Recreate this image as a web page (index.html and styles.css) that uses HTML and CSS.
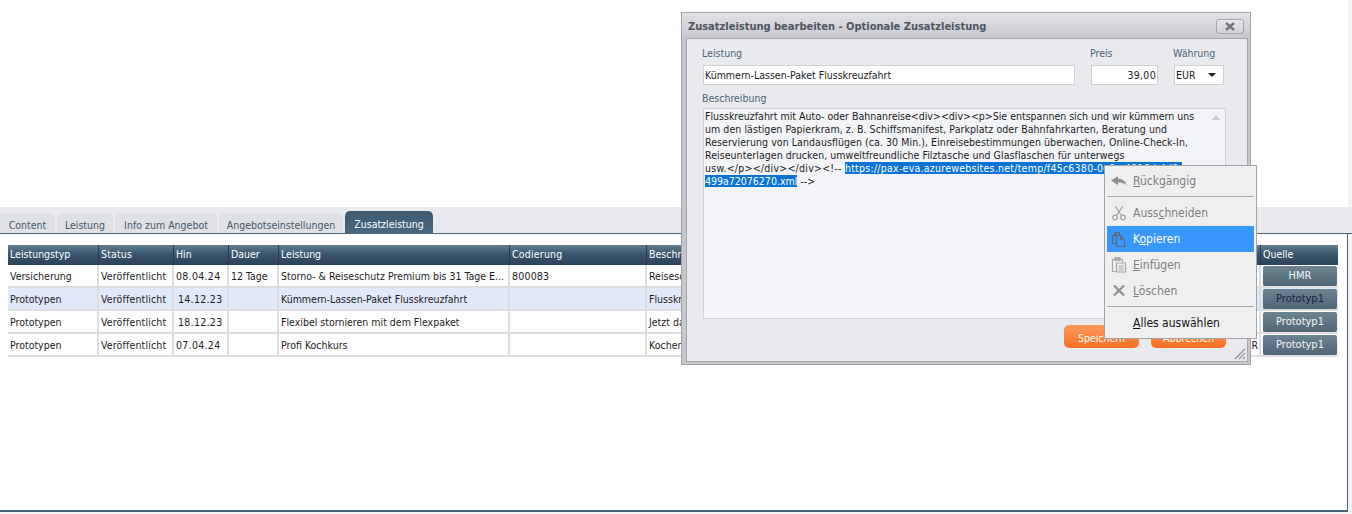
FILE: index.html
```html
<!DOCTYPE html>
<html lang="de">
<head>
<meta charset="utf-8">
<title>Zusatzleistung</title>
<link rel="stylesheet" href="styles.css">
</head>
<body>
<div class="page">
  <div class="top"></div>
  <div class="tabbar">
    <div class="tab t1">Content</div>
    <div class="tab t2">Leistung</div>
    <div class="tab t3">Info zum Angebot</div>
    <div class="tab t4">Angebotseinstellungen</div>
    <div class="tab t5 active">Zusatzleistung</div>
  </div>
  <div class="content">
    <div class="grid">
      <div class="row head">
        <div class="c c1">Leistungstyp</div><div class="c c2">Status</div><div class="c c3">Hin</div><div class="c c4">Dauer</div><div class="c c5">Leistung</div><div class="c c6">Codierung</div><div class="c c7">Beschreibung</div><div class="c c8">Quelle</div>
      </div>
      <div class="row">
        <div class="c c1">Versicherung</div><div class="c c2">Veröffentlicht</div><div class="c c3">08.04.24</div><div class="c c4">12 Tage</div><div class="c c5">Storno- &amp; Reiseschutz Premium bis 31 Tage E...</div><div class="c c6">800083</div><div class="c c7">Reiseschutz<span class="tail">...</span></div><div class="c c8"><span class="src">HMR</span></div>
      </div>
      <div class="row sel">
        <div class="c c1">Prototypen</div><div class="c c2">Veröffentlicht</div><div class="c c3 r">14.12.23</div><div class="c c4"></div><div class="c c5">Kümmern-Lassen-Paket Flusskreuzfahrt</div><div class="c c6"></div><div class="c c7">Flusskreuzfahrt<span class="tail">...</span></div><div class="c c8"><span class="src dark">Prototyp1</span></div>
      </div>
      <div class="row">
        <div class="c c1">Prototypen</div><div class="c c2">Veröffentlicht</div><div class="c c3 r">18.12.23</div><div class="c c4"></div><div class="c c5">Flexibel stornieren mit dem Flexpaket</div><div class="c c6"></div><div class="c c7">Jetzt das<span class="tail">...</span></div><div class="c c8"><span class="src">Prototyp1</span></div>
      </div>
      <div class="row">
        <div class="c c1">Prototypen</div><div class="c c2">Veröffentlicht</div><div class="c c3">07.04.24</div><div class="c c4"></div><div class="c c5">Profi Kochkurs</div><div class="c c6"></div><div class="c c7">Kochen<span class="tail">R</span></div><div class="c c8"><span class="src">Prototyp1</span></div>
      </div>
    </div>
  </div>
</div>

<section class="dialog">
  <header class="dlg-title">
    <span>Zusatzleistung bearbeiten - Optionale Zusatzleistung</span>
    <button class="close" type="button"><svg width="12" height="9" viewBox="0 0 12 9"><path d="M2 1l8 7M10 1L2 8" stroke="#72757c" stroke-width="2.400" fill="none"/></svg></button>
  </header>
  <div class="dlg-body">
    <div class="fields">
      <label class="f f-name"><span>Leistung</span><div class="input">Kümmern-Lassen-Paket Flusskreuzfahrt</div></label>
      <label class="f f-price"><span>Preis</span><div class="input right">39,00</div></label>
      <label class="f f-cur"><span>Währung</span><div class="input select">EUR<i class="caret"></i></div></label>
    </div>
    <div class="f-desc">
      <span class="lbl">Beschreibung</span>
      <div class="area">
        <div class="txt">
          <div>Flusskreuzfahrt mit Auto- oder Bahnanreise&lt;div&gt;&lt;div&gt;&lt;p&gt;Sie entspannen sich und wir kümmern uns</div>
          <div class="ln">um den lästigen Papierkram, z. B. Schiffsmanifest, Parkplatz oder Bahnfahrkarten, Beratung und</div>
          <div class="ln">Reservierung von Landausflügen (ca. 30 Min.), Einreisebestimmungen überwachen, Online-Check-In,</div>
          <div class="ln">Reiseunterlagen drucken, umweltfreundliche Filztasche und Glasflaschen für unterwegs</div>
          <div class="wide">usw.&lt;/p&gt;&lt;/div&gt;&lt;/div&gt;&lt;!-- <mark>https://pax-eva.azurewebsites.net/temp/f45c6380-0c6a-4816-b4d9-</mark></div>
          <div><mark>499a72076270.xml</mark> --&gt;</div>
        </div>
        <svg class="up" width="8" height="5" viewBox="0 0 8 5"><path d="M4 0l4 5H0z" fill="#c9cbd0"/></svg>
      </div>
    </div>
    <div class="actions">
      <button class="btn" type="button">Speichern</button>
      <button class="btn" type="button">Abbrechen</button>
    </div>
    <svg class="grip" width="12" height="12" viewBox="0 0 12 12"><path d="M11 1L1 11M11 5L5 11M11 9L9 11" stroke="#8f9198" stroke-width="1.200" fill="none"/></svg>
  </div>
</section>

<nav class="menu">
  <div class="mi"><svg class="ic" width="16" height="10" viewBox="0 0 16 10"><path d="M7 0L0 4.500 7 9V6.500c3.500 0 6 .5 8.500 2.500C14.500 5 11.500 3 7 2.500z" fill="#8e8e8e"/></svg><span><u>R</u>ückgängig</span></div>
  <div class="sep"></div>
  <div class="mi"><svg class="ic" width="16" height="16" viewBox="0 0 16 16"><g fill="none" stroke="#a3a3a3" stroke-width="1.200"><path d="M4 1l6.500 9.500M12 1L5.500 10.500"/><circle cx="4" cy="12.500" r="2.300"/><circle cx="12" cy="12.500" r="2.300"/></g></svg><span>Auss<u>c</u>hneiden</span></div>
  <div class="mi hot"><svg class="ic" width="16" height="16" viewBox="0 0 16 16"><g fill="none" stroke="#5f6a78" stroke-width="1.200"><path d="M1.500 5L5 1.500h3.500V4M1.500 5v7.500H5M1.500 5H5V1.500"/><path d="M5.500 4.500h4l4 4v7h-8zM9.500 4.500v4h4"/></g></svg><span>K<u>o</u>pieren</span></div>
  <div class="mi"><svg class="ic" width="16" height="16" viewBox="0 0 16 16"><g fill="none" stroke="#a9a9a9" stroke-width="1.200"><path d="M4 2.500H1.500v12H5"/><path d="M9 2.500h2.500V5"/><path d="M4 .5h5v3H4z" fill="#a9a9a9"/><path d="M5.500 6h9v9h-9zM7.500 9h5M7.500 11h5M7.500 13h5"/></g></svg><span><u>E</u>infügen</span></div>
  <div class="mi"><svg class="ic" width="16" height="16" viewBox="0 0 16 16"><path d="M3 2.500l10 10M13 2.500l-10 10" stroke="#8e8e8e" stroke-width="2.200" fill="none"/></svg><span><u>L</u>öschen</span></div>
  <div class="sep"></div>
  <div class="mi strong"><span class="ic"></span><span><u>A</u>lles auswählen</span></div>
</nav>
</body>
</html>
```

FILE: styles.css
```css
* { box-sizing: border-box; }
html, body { margin: 0; padding: 0; height: 514px; overflow: hidden; background: #fff; }
body { font: 10.5px/13px "DejaVu Sans", sans-serif; font-stretch: condensed; color: #1c1c22; }
button { font-family: inherit; font-stretch: inherit; }
.page { display: flex; flex-direction: column; width: 1352px; height: 514px; background: #f3f3f5; }
.top { height: 207px; width: 1348px; background: #fff; flex: none; }
.tabbar { display: flex; align-items: flex-end; gap: 2px; height: 27px; flex: none; background: #e9eaee; border-bottom: 1px solid #48637a; }
.tab { height: 20px; padding-top: 1px; text-align: center; white-space: nowrap; line-height: 22px; background: #dfe1e4; color: #46586a; border-radius: 5px 5px 0 0; }
.tab:first-child { border-top-left-radius: 0; }
.t1 { width: 55px; }
.t2 { width: 56px; }
.t3 { width: 102px; }
.t4 { width: 124px; }
.t5 { width: 88px; }
.tab.active { height: 22px; line-height: 24px; background: linear-gradient(#3f5a70, #4a677e); color: #fff; }
.content { flex: none; width: 1348px; height: 278px; background: #fff; padding: 11px 0 0 8px; border-right: 1px solid #48637a; border-bottom: 2px solid #48637a; }
.grid { display: flex; flex-direction: column; width: 1330px; }
.row { display: flex; height: 23px; border-bottom: 2px solid #dcdee2; }
.row.sel { background: #e0e8fa; }
.row.head { height: 20px; border: 0; color: #fff; background: linear-gradient(#637f92, #3b566c 45%, #2c4358); }
.c { flex: none; padding: 0 0 0 2px; line-height: 23px; white-space: nowrap; overflow: hidden; border-right: 2px solid #dcdee2; }
.head .c { line-height: 19px; border-right: 1px solid #263b4e; padding-right: 1px; }
.c1 { width: 91px; }
.c2 { width: 75px; letter-spacing: .15px; }
.c3 { width: 55px; letter-spacing: .3px; }
.head .c3 { letter-spacing: 0; }
.c3.r { padding-left: 4px; }
.c4 { width: 50px; }
.c5 { width: 231px; }
.c6 { width: 137px; letter-spacing: .2px; }
.c7 { width: 614px; position: relative; }
.c8 { width: 77px; border-right: 0; padding: 1px 0 0 2px; }
.head .c8 { border: 0; padding: 0 0 0 2px; }
.tail { position: absolute; right: 1px; top: 0; }
.src { display: block; width: 74px; height: 20px; line-height: 19px; text-align: center; color: #eef3f6; border-radius: 2px; background: linear-gradient(#6d8493, #4f6676); box-shadow: 0 1px 1px #9aa4ac; font-size: 11px; }
.src.dark { color: #1a2438; }

.dialog { position: absolute; left: 681px; top: 12px; width: 570px; height: 353px; background: linear-gradient(#e2e3e7, #c6c7cd 26px); border: 1px solid #a0a1a9; }
.dlg-title { height: 25px; display: flex; align-items: center; justify-content: space-between; padding: 1px 6px 0 6px; font-size: 11px; font-weight: 700; color: #50555f; }
.close { width: 28px; height: 15px; padding: 0; display: flex; align-items: center; justify-content: center; background: linear-gradient(#e9eaed, #cfd0d4); border: 1px solid #a5a7ad; border-radius: 3px; }
.dlg-body { position: relative; margin: 0 2px 0 4px; height: 324px; background: #e9eaee; border: 1px solid #a6a7ae; padding: 8px 0 0 16px; }
.fields { display: flex; }
.f { display: flex; flex-direction: column; color: #4d6478; }
.f span { height: 18px; padding-left: 0; margin-left: -1px; }
.f-name { width: 388px; }
.f-price { width: 83px; }
.f-cur { width: 50px; }
.input { height: 20px; line-height: 19px; background: #fff; border: 1px solid #cfd1d6; color: #1c1c22; padding: 0 1px; white-space: nowrap; }
.f-name .input { width: 372px; }
.f-price .input { width: 67px; }
.f-cur .input { width: 50px; }
.input.right { text-align: right; padding-right: 1px; letter-spacing: .3px; }
.select { position: relative; }
.caret { position: absolute; right: 7px; top: 7px; border: 4px solid transparent; border-top: 4px solid #222; border-bottom: 0; width: 0; height: 0; }
.f-desc { margin-top: 7px; color: #4d6478; }
.lbl { display: block; height: 16px; margin-left: -1px; }
.area { position: relative; height: 211px; width: 523px; background: #f3f4f7; border: 1px solid #cfd1d6; padding: 1px; color: #1c1c22; }
.txt { white-space: nowrap; }
.ln { letter-spacing: .06px; }
.wide { letter-spacing: .25px; }
mark { background: #0a74d6; color: #fff; }
.up { position: absolute; right: 5px; top: 6px; }
.actions { position: absolute; left: 377px; top: 286px; display: flex; gap: 12px; }
.btn { width: 75px; height: 23px; padding: 3px 0 0; border: 0; border-radius: 5px; color: #fff; font: inherit; background: linear-gradient(#fb9a5e, #fb6f22); }
.grip { position: absolute; right: 1px; bottom: 1px; }

.menu { position: absolute; left: 1104px; top: 165px; width: 153px; height: 174px; background: #efeff0; border: 1px solid #a2a4a8; padding: 2px; font-size: 12px; color: #7d7d80; }
.mi { display: flex; align-items: center; height: 26px; }
.mi span { padding-top: 1px; }
.ic { flex: none; width: 16px; margin: 0 6px 0 4px; }
.sep { height: 1px; margin: 2px 0 3px; background: #a8a9ac; }
.mi.hot { background: #3797ff; color: #fff; }
.mi.strong { color: #141414; }
```
